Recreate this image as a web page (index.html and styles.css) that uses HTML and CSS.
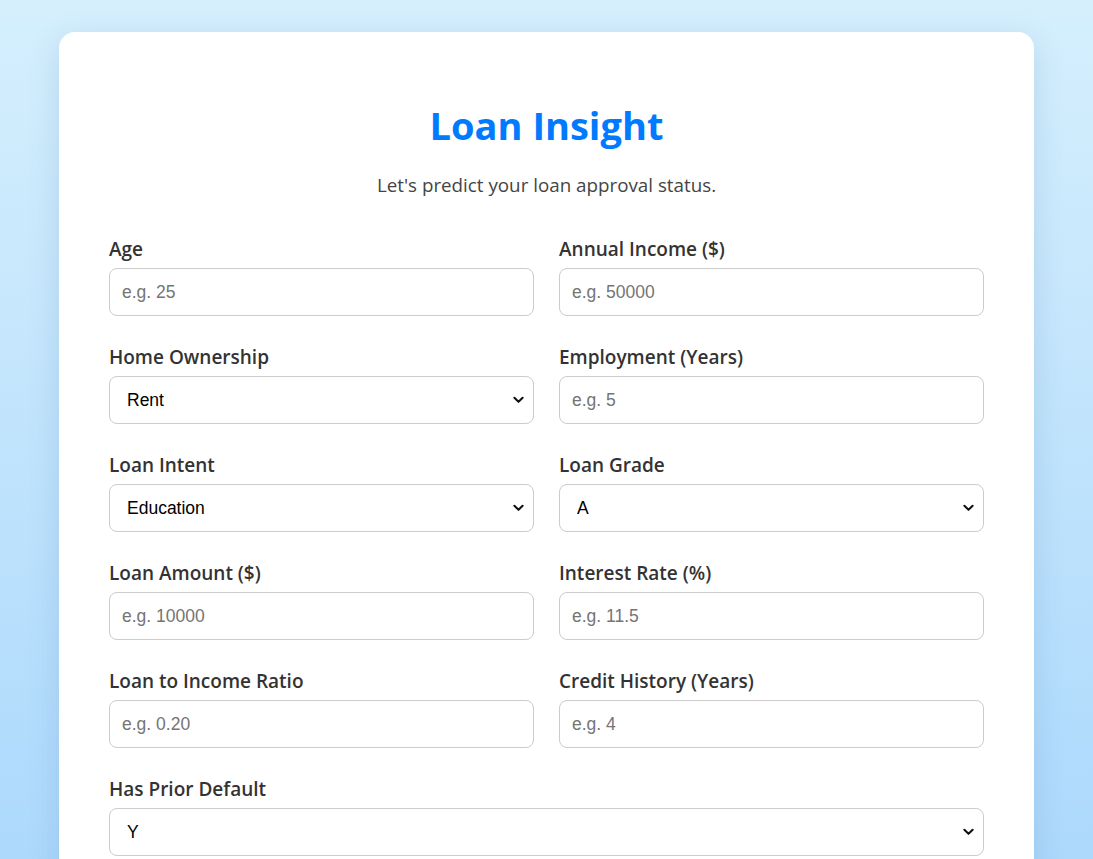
FILE: index.html
```html
<!DOCTYPE html>
<html lang="en">
<head>
<meta charset="utf-8">
<title>Loan Insight</title>
<link rel="stylesheet" href="styles.css">
</head>
<body>
<div class="card">
  <h1 class="title">Loan Insight</h1>
  <p class="subtitle">Let's predict your loan approval status.</p>
  <form class="grid">
    <div class="field"><label>Age</label><input type="text" placeholder="e.g. 25"></div>
    <div class="field"><label>Annual Income ($)</label><input type="text" placeholder="e.g. 50000"></div>
    <div class="field"><label>Home Ownership</label><select><option>Rent</option></select></div>
    <div class="field"><label>Employment (Years)</label><input type="text" placeholder="e.g. 5"></div>
    <div class="field"><label>Loan Intent</label><select><option>Education</option></select></div>
    <div class="field"><label>Loan Grade</label><select><option>A</option></select></div>
    <div class="field"><label>Loan Amount ($)</label><input type="text" placeholder="e.g. 10000"></div>
    <div class="field"><label>Interest Rate (%)</label><input type="text" placeholder="e.g. 11.5"></div>
    <div class="field"><label>Loan to Income Ratio</label><input type="text" placeholder="e.g. 0.20"></div>
    <div class="field"><label>Credit History (Years)</label><input type="text" placeholder="e.g. 4"></div>
    <div class="field full"><label>Has Prior Default</label><select><option>Y</option></select></div>
  </form>
</div>
</body>
</html>
```

FILE: styles.css
```css
html, body { margin: 0; padding: 0; }
body {
  min-height: 100vh;
  background: linear-gradient(180deg, #d5effd 0%, #a9d7fc 100%);
  font-family: "Open Sans", "Noto Sans", sans-serif;
  padding: 32px 59px 0 59px;
  box-sizing: border-box;
}
.card {
  background: #fff;
  border-radius: 16px;
  box-shadow: 0 8px 30px rgba(60, 110, 160, 0.18);
  padding: 50px 50px 40px;
  min-height: 900px;
  box-sizing: border-box;
}
.title {
  margin: 18px 0 0;
  text-align: center;
  color: #007bff;
  font-size: 38px;
  font-weight: 700;
  line-height: 50px;
}
.subtitle {
  margin: 22px 0 0;
  text-align: center;
  color: #444;
  font-size: 18.8px;
  line-height: 26px;
}
.grid {
  margin-top: 39px;
  display: grid;
  grid-template-columns: 1fr 1fr;
  column-gap: 25px;
  row-gap: 29px;
}
.full { grid-column: 1 / -1; }
.field { display: flex; flex-direction: column; }
.field label {
  font-weight: 600;
  font-size: 19px;
  line-height: 24px;
  color: #333;
  margin-bottom: 7px;
}
.field input, .field select {
  height: 48px;
  box-sizing: border-box;
  border: 1px solid #ccc;
  border-radius: 8px;
  padding: 0 12px;
  font-family: "Liberation Sans", Arial, sans-serif;
  font-size: 17.5px;
  background-color: #fff;
  color: #000;
}
.field select {
  -webkit-appearance: none;
  appearance: none;
  padding-left: 17px;
  background-image: url("data:image/svg+xml;utf8,<svg xmlns='http://www.w3.org/2000/svg' width='12' height='8' viewBox='0 0 12 8'><path d='M1.5 1.5 L6 6 L10.5 1.5' fill='none' stroke='%23111' stroke-width='2.2' stroke-linecap='round' stroke-linejoin='round'/></svg>");
  background-repeat: no-repeat;
  background-position: right 9px center;
  background-size: 11px 8px;
}
.field input::placeholder { color: #757575; }
```
